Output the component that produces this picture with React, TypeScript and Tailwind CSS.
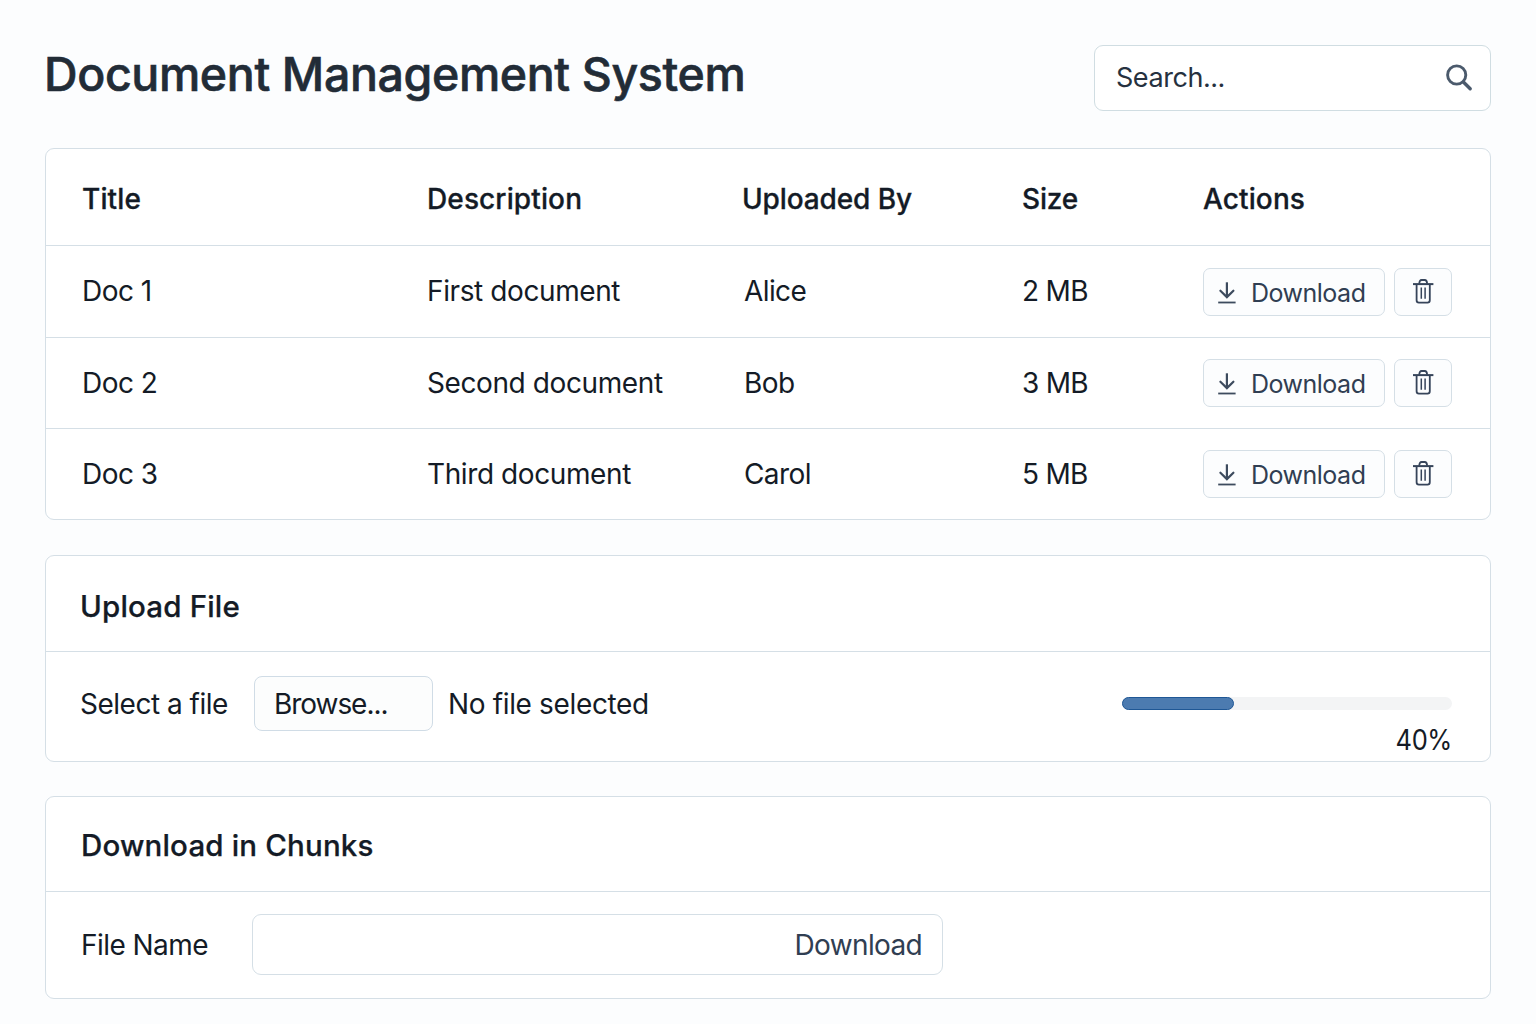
import type { ReactNode } from "react";

type Doc = { title: string; description: string; by: string; size: string };

const docs: Doc[] = [
  { title: "Doc 1", description: "First document", by: "Alice", size: "2 MB" },
  { title: "Doc 2", description: "Second document", by: "Bob", size: "3 MB" },
  { title: "Doc 3", description: "Third document", by: "Carol", size: "5 MB" },
];

const columns = "grid grid-cols-[346px_315px_279px_181px_1fr] pl-9";

function SearchIcon() {
  return (
    <svg width="28" height="28" viewBox="0 0 28 28" fill="none" stroke="#4b5a6c" strokeLinecap="round">
      <circle cx="11.7" cy="11" r="9.1" strokeWidth="2.9" />
      <path d="M18.4 18L25.2 24.8" strokeWidth="3.4" />
    </svg>
  );
}

function DownloadIcon() {
  return (
    <svg width="20" height="24" viewBox="0 0 20 24" fill="none" stroke="#3d4b5e">
      <path d="M9.9 2.3V16.9" strokeWidth="2.2" />
      <path d="M3.4 10.7L9.9 17.1L16.4 10.7" strokeWidth="2.2" strokeLinecap="round" />
      <path d="M1.2 22.5H18.6" strokeWidth="1.8" />
    </svg>
  );
}

function TrashIcon() {
  return (
    <svg width="22" height="26" viewBox="0 0 22 26" fill="none" stroke="#36445a" strokeWidth="1.8">
      <path d="M1 5.1H21.4" strokeWidth="2" />
      <path d="M7.3 4.8C7.3 2.2 8.1 1 9.7 1H12.7C14.3 1 15.1 2.2 15.1 4.8" />
      <path d="M4.6 5.5V21.3Q4.6 23.6 6.9 23.6H15.5Q17.8 23.6 17.8 21.3V5.5" />
      <path d="M9.3 8.6V19.8M13.1 8.6V19.8" strokeWidth="1.5" />
    </svg>
  );
}

function Card({ className, children }: { className: string; children: ReactNode }) {
  return (
    <section className={`rounded-[9px] border border-[#d5dfe6] bg-white ${className}`}>{children}</section>
  );
}

export default function App() {
  return (
    <div className="h-[1024px] w-[1536px] overflow-hidden bg-[#fcfdfe] pr-[45px] pl-[45px] font-['Inter',sans-serif] text-[28px] leading-[34px] font-normal tracking-[-0.4px] text-[#141b26]">
      <header className="flex items-start justify-between pt-[45px]">
        <h1 className="mt-px -ml-px text-[46.5px] leading-[56px] font-medium tracking-[-0.38px] whitespace-nowrap text-[#222c37] [-webkit-text-stroke:0.6px_#222c37]">
          Document Management System
        </h1>
        <div className="flex h-[66px] w-[397px] items-center justify-between rounded-[9px] border border-[#d0dde2] bg-white pr-[17px] pl-[21px] text-[#26313f]">
          <span className="text-[27px] tracking-[-0.45px]">Search...</span>
          <SearchIcon />
        </div>
      </header>

      <Card className="mt-[37px] h-[372px]">
        <div className={`${columns} h-[97px] items-center border-b border-[#d5dfe6] pt-[3px] font-medium tracking-[0.12px] [-webkit-text-stroke:0.3px_#141b26]`}>
          <span>Title</span>
          <span className="-ml-px">Description</span>
          <span className="-ml-px tracking-[-0.12px]">Uploaded By</span>
          <span className="tracking-[-0.2px]">Size</span>
          <span>Actions</span>
        </div>
        {docs.map((doc) => (
          <div
            key={doc.title}
            className={`${columns} group h-[92px] items-center border-b border-[#d5dfe6] last:h-[90px] last:border-b-0 nth-[3]:h-[91px]`}
          >
            <span className="tracking-[-0.55px] group-nth-[2]:-mt-px">{doc.title}</span>
            <span className="-ml-px group-nth-[2]:-mt-px">{doc.description}</span>
            <span className="pl-px tracking-[-0.6px] group-nth-[2]:-mt-px">{doc.by}</span>
            <span className="tracking-[-0.7px] group-nth-[2]:-mt-px">{doc.size}</span>
            <div className="flex gap-[9px]">
              <button className="flex h-12 w-[182px] items-center rounded-[7px] border border-[#d5dfe6] bg-[#fcfdfe] pl-[13px] text-[25px] tracking-[-0.5px] text-[#303e52]">
                <DownloadIcon />
                <span className="mt-[2px] ml-[14px]">Download</span>
              </button>
              <button className="flex h-12 w-[58px] items-center justify-center rounded-[7px] border border-[#d5dfe6] bg-[#fcfdfe]">
                <TrashIcon />
              </button>
            </div>
          </div>
        ))}
      </Card>

      <Card className="mt-[35px] h-[207px]">
        <h2 className="flex h-[96px] items-center border-b border-[#d5dfe6] pt-[4px] pl-[34px] text-[29.5px] font-medium tracking-[0.17px] [-webkit-text-stroke:0.25px_#141b26]">
          Upload File
        </h2>
        <div className="flex pl-[34px]">
          <span className="mt-[35px] w-[174px] tracking-[-0.5px]">Select a file</span>
          <button className="mt-[24px] flex h-[55px] w-[179px] items-center rounded-[8px] border border-[#d0dce6] bg-[#fcfdfd] pl-[19px] tracking-[-1.05px]">
            Browse...
          </button>
          <span className="mt-[35px] ml-[15px] tracking-[-0.35px]">No file selected</span>
          <div className="mt-[45px] mr-[38px] ml-auto w-[330px]">
            <div className="h-[13px] rounded-full bg-[#f3f4f5]">
              <div className="h-[13px] w-[112px] rounded-full border border-[#1f5795] bg-[#4c7bb0]" />
            </div>
            <div className="mt-[13px] origin-right scale-x-[0.91] text-right">40%</div>
          </div>
        </div>
      </Card>

      <Card className="mt-[34px] h-[203px]">
        <h2 className="flex h-[95px] items-center border-b border-[#d5dfe6] pt-[2px] pl-[35px] text-[29.5px] font-medium tracking-[0.17px] [-webkit-text-stroke:0.25px_#141b26]">
          Download in Chunks
        </h2>
        <div className="flex items-start pl-[35px]">
          <span className="mt-[36px] w-[171px] tracking-[-0.55px]">File Name</span>
          <div className="mt-[22px] flex h-[61px] w-[691px] items-center justify-end rounded-[9px] border border-[#d5dfe6] bg-white pr-[20px] tracking-[-0.65px] text-[#303e52]">
            Download
          </div>
        </div>
      </Card>
    </div>
  );
}
